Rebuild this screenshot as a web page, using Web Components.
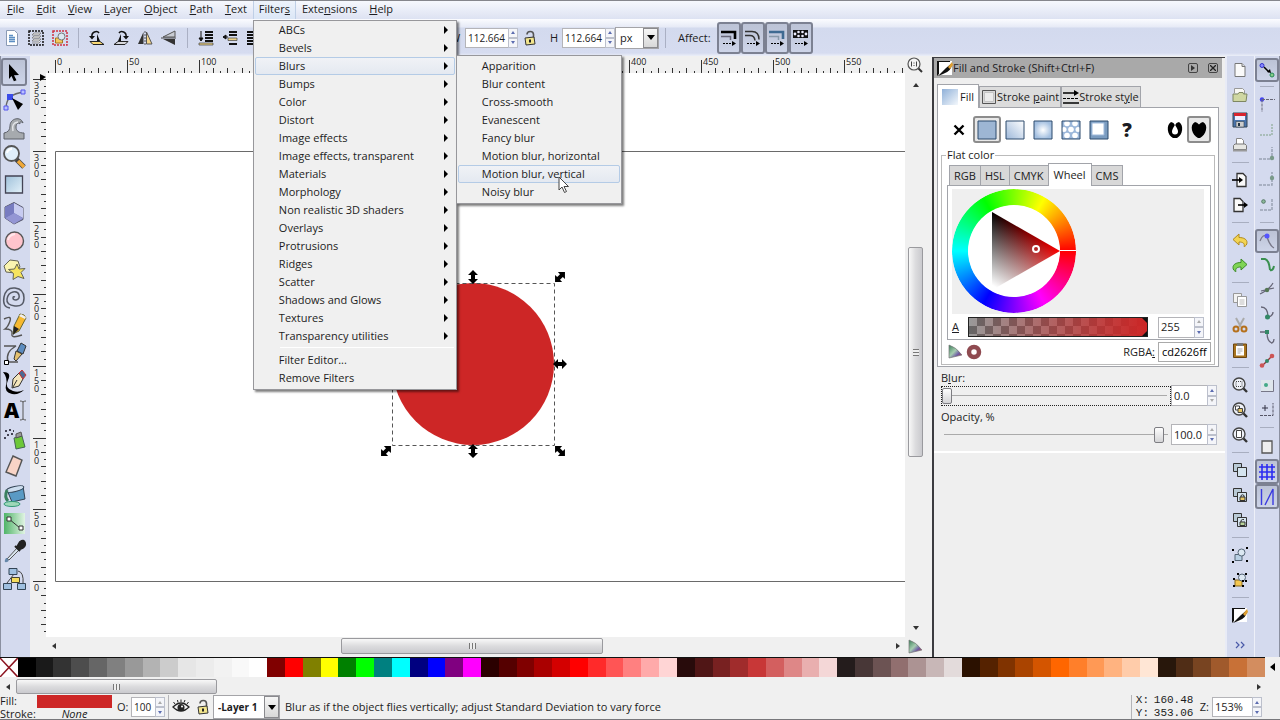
<!DOCTYPE html>
<html lang="en">
<head>
<meta charset="utf-8">
<title>Vector editor</title>
<style>
  html, body { margin: 0; height: 100%; }
  body {
    font: 11px/14px "Open Sans", "Noto Sans", sans-serif;
    color: #1c1c22;
    background: #f0f0f0;
    --chrome: #d4daee;
    --line: #a2a4aa;
  }
</style>
</head>
<body>
<app-window></app-window>
<script>
/* ---------- icon drawings: [size, markup] ---------- */
const page = '<path d="M3 1.5h7l3 3v10H3z" fill="#fafafa" stroke="#777"/><path d="M10 1.5v3h3" fill="#ddd" stroke="#777"/>';
const lens = '<circle cx="7" cy="7" r="6" fill="#eef1f8" stroke="#444" stroke-width="1.4"/><path d="M11.500 11.500L15 15" stroke="#333" stroke-width="2.400"/>';
const stack = '<path d="M1.500 1.500h8v8h-8z" fill="#b9cad6" stroke="#333"/><path d="M5.500 5.500h9v9h-9z" fill="#d5e4ef" stroke="#333"/>';
const ICONS = {
  /* toolbar */
  selall: [16, '<path d="M2.500.5h8l3 3v12h-11z" fill="#fff" stroke="#8a9ab5"/><path d="M5 5.500h4M5 7.500h6M5 9.500h6M5 11.500h6" stroke="#5d8fc4" stroke-width="1.500"/>'],
  sellayers: [16, '<path d="M1 1h14v14H1z" fill="none" stroke="#111" stroke-width="1.500" stroke-dasharray="2 1"/><path d="M4 5l2-2h7l-2 2zM4 8l2-2h7l-2 2zM4 11l2-2h7l-2 2zM4 13h7l2-2" fill="#eee" stroke="#777" stroke-width=".8"/>'],
  desel: [16, '<path d="M1 1h14v14H1z" fill="none" stroke="#d03040" stroke-width="1.500" stroke-dasharray="2 1"/><path d="M3.500 8h7v5h-7z" fill="#f5c860" stroke="#a87820"/><circle cx="9.500" cy="6.500" r="3.500" fill="#dce8f2" stroke="#777"/>'],
  rotl: [16, '<path d="M3 7c-1-5 5-7 7-4" fill="none" stroke="#111" stroke-width="1.500"/><path d="M0 6h6L3 9.500zM8 4l3 7H8z" fill="#111"/><path d="M1 11.500h10l4 3H4z" fill="#f7d774" stroke="#222"/>'],
  rotr: [16, '<path d="M13 7c1-5-5-7-7-4" fill="none" stroke="#111" stroke-width="1.500"/><path d="M16 6h-6l3 3.500zM8 4l-3 7h3z" fill="#111"/><path d="M15 11.500H5l-4 3h11z" fill="#d8d8dc" stroke="#222"/>'],
  fliph: [16, '<path d="M6.500 2v12H1z" fill="#333"/><path d="M9.500 2v12H15z" fill="#f3d488" stroke="#555"/><path d="M8 1v14" stroke="#555" stroke-dasharray="2 1"/>'],
  flipv: [16, '<path d="M14 7V1L2 7z" fill="#c8ccd4" stroke="#555"/><path d="M14 9v6L2 9z" fill="#333"/><path d="M0 8h15" stroke="#444"/>'],
  tobottom: [16, '<path d="M7 2h8M7 5h8M7 8h8M7 11h8" stroke="#111" stroke-width="2"/><path d="M3 1v8M1 8h4l-2 3z" stroke="#111" fill="#111"/><path d="M1 13h14v2H1z" fill="#e8cf86" stroke="#444" stroke-width=".7"/>'],
  lower: [16, '<path d="M7 2h8M7 5h8M7 14h8" stroke="#111" stroke-width="2"/><path d="M1 7h5M4 5v4L1 7z" stroke="#111" fill="#111"/><path d="M6 8h9v2.500H6z" fill="#e8cf86" stroke="#444" stroke-width=".7"/>'],
  raise: [16, '<path d="M1 2h8M1 5h8M1 8h8M1 11h8M1 14h8" stroke="#111" stroke-width="2"/>'],
  lock: [16, '<path d="M5 4.500c0-4 6.500-4 6.500 0V8" fill="none" stroke="#555" stroke-width="1.600"/><path d="M3 8l9-1 1 7-9 1z" fill="#f2e58c" stroke="#333"/><path d="M8 9.500v3" stroke="#222" stroke-width="2"/>'],
  affstroke: [16, '<path d="M0 2h14v7" fill="none" stroke="#000" stroke-width="2.600"/><path d="M0 6.500h9.500V10" fill="none" stroke="#667" stroke-width="1.500"/><path d="M2 13.500h9" stroke="#000" stroke-dasharray="2 1"/><path d="M11 11l4 2.500-4 2.500z"/>'],
  affcorner: [16, '<path d="M0 1.500h7q7 0 7 8M0 5.500h5q4.500 0 5 5" fill="none" stroke="#333" stroke-width="1.500"/><path d="M2 13.500h9" stroke="#000" stroke-dasharray="2 1"/><path d="M11 11l4 2.500-4 2.500z"/>'],
  affgrad: [16, '<path d="M0 2h14v7" fill="none" stroke="#3f6a92" stroke-width="2.600"/><path d="M0 6.500h9.500V10" fill="none" stroke="#89a" stroke-width="1.500"/><path d="M2 13.500h9" stroke="#000" stroke-dasharray="2 1"/><path d="M11 11l4 2.500-4 2.500z"/>'],
  affpat: [16, '<path d="M0 0h15v8H0z" fill="#111"/><g fill="#eef"><circle cx="2" cy="4" r="1.400"/><circle cx="5.500" cy="2" r="1.300"/><circle cx="5.500" cy="6" r="1.300"/><circle cx="9.500" cy="2" r="1.300"/><circle cx="9.500" cy="6" r="1.300"/><circle cx="13" cy="4" r="1.400"/></g><path d="M2 13.500h9" stroke="#000" stroke-dasharray="2 1"/><path d="M11 11l4 2.500-4 2.500z"/>'],
  eye: [16, '<path d="M0 8q8-8 16 0q-8 8-16 0z" fill="#eee" stroke="#222" stroke-width="1.300"/><circle cx="8" cy="8.500" r="3.500" fill="#222"/><circle cx="9" cy="7.500" r="1" fill="#fff"/><path d="M2 5L.5 3M5 3.500L4.500 1M8 3V.5M11 3.500L12 1M14 5l1.500-2" stroke="#222"/>'],
  cms: [16, '<path d="M2 1v13L15 11Q9 3 2 1z" fill="url(#cmsg)" stroke="#777" stroke-width=".7"/><defs><linearGradient id="cmsg" x1="0" y1="0" x2="1" y2="1"><stop offset="0" stop-color="#3a7f5a"/><stop offset=".45" stop-color="#a6cdb0"/><stop offset=".7" stop-color="#6f5ba6"/><stop offset="1" stop-color="#d0362c"/></linearGradient></defs>'],
  ring: [16, '<circle cx="8" cy="8" r="5" fill="none" stroke="#8f4a50" stroke-width="4.500"/>'],
  one: [16, '<circle cx="7" cy="7" r="6" fill="#f4f4f4" stroke="#555" stroke-width="1.200"/><path d="M11.500 11.500L15 15" stroke="#333" stroke-width="2"/><path d="M4.500 4.500v5M9.500 4.500v5M7 5.500v1M7 8v1" stroke="#444"/>'],
  brush: [16, '<path d="M1 1h14v14H1z" fill="#fff"/><path d="M0 1h13v1H2v12l-2 2z" fill="#111"/><path d="M15 3q0 8-9 11l-5 2 8-8z" fill="#111"/><path d="M11 7l4-5 1 3-3 4z" fill="#e0a030"/>'],
  /* paint kinds */
  px: [16, '<path d="M3.500 3.500l9 9M12.500 3.500l-9 9" stroke="#000" stroke-width="2.400"/>'],
  pflat: [20, '<path d="M1 1h18v18H1z" fill="#9db6d4" stroke="#2c4a6c"/>'],
  plin: [20, '<defs><linearGradient id="gl" x1="0" y1="1" x2="1" y2="0"><stop offset="0" stop-color="#9db8da"/><stop offset="1" stop-color="#fff"/></linearGradient></defs><path d="M1 1h18v18H1z" fill="url(#gl)" stroke="#2c4a6c"/>'],
  prad: [20, '<defs><radialGradient id="gr"><stop offset="0" stop-color="#fff"/><stop offset="1" stop-color="#a3bfe0"/></radialGradient></defs><path d="M1 1h18v18H1z" fill="url(#gr)" stroke="#2c4a6c"/>'],
  ppat: [20, '<path d="M1 1h18v18H1z" fill="#9db8da"/><g fill="#fff"><circle cx="6" cy="3.500" r="2.800"/><circle cx="14" cy="3.500" r="2.800"/><circle cx="3" cy="9.500" r="2.500"/><circle cx="10" cy="9.500" r="2.800"/><circle cx="17" cy="9.500" r="2.500"/><circle cx="6" cy="15.500" r="2.800"/><circle cx="14" cy="15.500" r="2.800"/></g><path d="M1 1h18v18H1z" fill="none" stroke="#2c4a6c"/>'],
  pswatch: [20, '<path d="M1 1h18v18H1z" fill="#7b9cc0" stroke="#2c4a6c"/><path d="M3 3h12v12H3z" fill="#fff" stroke="#9db8da"/>'],
  heart0: [18, '<path fill-rule="evenodd" d="M5 1q2 0 4 2.500Q11 1 13 1c5 3 4 13-2 16H7C1 14 0 4 5 1zM9 4Q6 8 6 10.500q0 3 3 3t3-3Q12 8 9 4z"/><path d="M7.500 0h3L9 5z" fill="#fff"/>'],
  heart1: [18, '<path d="M5 1q2 0 4 2.500Q11 1 13 1c6 3 3 13-3 16H8C2 14-1 4 5 1z"/>'],
  tfill: [16, '<defs><linearGradient id="tf" x1="0" y1="0" x2="1" y2="1"><stop offset="0" stop-color="#8fb0d8"/><stop offset="1" stop-color="#f4f8fc"/></linearGradient></defs><path d="M0 0h16v16H0z" fill="url(#tf)"/>'],
  tpaint: [16, '<path d="M1.500 1.500h13v13h-13z" fill="#d8d8d8" stroke="#555"/><path d="M3.500 3.500h9v9h-9z" fill="#ececec" stroke="#c4c4c4"/>'],
  tstyle: [16, '<path d="M0 4h13" stroke="#000" stroke-width="1.500"/><path d="M11 1l5 3-5 3z"/><path d="M0 9.500h16" stroke="#000" stroke-dasharray="3 1"/><path d="M0 14h16" stroke="#000" stroke-width="1.500"/>'],
  /* commands */
  newdoc: [16, page],
  open: [16, '<path d="M2.500 6V1.500h8l2 2V9" fill="#f8f8f4" stroke="#999"/><path d="M1 14V7h5l1-1.500h4l.5 1.500H15l-1 7.500H1z" fill="#cfd7a2" stroke="#7e8762"/>'],
  save: [16, '<path d="M1 1h14v14H1z" fill="#4a74ad" stroke="#345"/><path d="M2 1h12v3H2z" fill="#d8232e"/><path d="M3 4h10v4H3z" fill="#eef"/><path d="M4 9.500h8V15H4z" fill="#ccc" stroke="#345" stroke-width=".6"/><path d="M6 11h2v3H6z" fill="#234"/>'],
  print: [16, '<path d="M4.500 8V1.500h5l2 2V8" fill="#fff" stroke="#888"/><path d="M1.500 8.500L3 7h10l1.500 1.500v4h-13z" fill="#e6e6e2" stroke="#777"/><path d="M1 12.500h14v2H1z" fill="#999"/>'],
  imp: [16, '<path d="M5 1.500h6l3 3v10H5z" fill="#fafafa" stroke="#333" stroke-width="1.300"/><path d="M0 8h8" stroke="#000" stroke-width="1.600"/><path d="M7 5l4 3-4 3z"/>'],
  exp: [16, '<path d="M2 1.500h6l3 3v10H2z" fill="#fafafa" stroke="#333" stroke-width="1.300"/><path d="M6 8h7" stroke="#000" stroke-width="1.600"/><path d="M12 5l4 3-4 3z"/>'],
  undo: [16, '<path d="M7 2v3.500c5 0 8 2 8 5 0 2-1 3.500-3 4 1-3-1-4.500-5-4.500v3L1 7.500z" fill="#f3d452" stroke="#b08a1e"/>'],
  redo: [16, '<path d="M9 2v3.500c-5 0-8 2-8 5 0 2 1 3.500 3 4-1-3 1-4.500 5-4.500v3l6-5.500z" fill="#7fd454" stroke="#3c8a28"/>'],
  copy: [16, '<path d="M1.500 1.500h8v9h-8z" fill="#f2f2f2" stroke="#999"/><path d="M5.500 4.500h9v10h-9z" fill="#fff" stroke="#999"/><path d="M7.500 8h5M7.500 10h5M7.500 12h5" stroke="#bbb"/>'],
  cut: [16, '<path d="M4 1l5 9M12 1L7 10" stroke="#aaa" stroke-width="2"/><circle cx="4" cy="12" r="2.500" fill="none" stroke="#b5701c" stroke-width="2"/><circle cx="12" cy="12" r="2.500" fill="none" stroke="#b5701c" stroke-width="2"/>'],
  paste: [16, '<path d="M1.500 2h13v13.500h-13z" fill="#a8741e" stroke="#6a4410"/><path d="M4 4h8v9.500H4z" fill="#fff"/><path d="M5 1h6v3H5z" fill="#777"/><path d="M5.500 7h5M5.500 9h5M5.500 11h3" stroke="#aaa"/>'],
  zsel: [16, lens + '<path d="M4 4.500h6v5H4z" fill="none" stroke="#444" stroke-dasharray="1 1"/>'],
  zdraw: [16, lens + '<path d="M3.500 4h4v4h-4z" fill="#fff" stroke="#444"/><path d="M6 6.500h4.500v4H6z" fill="#e8c765" stroke="#444"/>'],
  zpage: [16, lens + '<path d="M4.500 3.500h5v7h-5z" fill="#fff" stroke="#444"/>'],
  dup: [16, stack],
  clone: [16, stack + '<path d="M8 10h5v3.500H8z" fill="#e8c765" stroke="#333"/><path d="M9 10V8.500q1.500-1.500 3 0V10" fill="none" stroke="#333"/>'],
  unlink: [16, stack + '<path d="M8 10h5v3.500H8z" fill="#b9d49a" stroke="#333"/><path d="M9 10V8.500q1.500-1.500 3-1" fill="none" stroke="#333"/>'],
  group: [16, '<path d="M3 7.500h7v6H3z" fill="#b8d0e4" stroke="#567"/><circle cx="9.500" cy="5.500" r="3.500" fill="#dce8f2" stroke="#567"/><path d="M0 2h2v2H0zM14 0h2v2h-2zM0 14h2v2H0zM14 13h2v2h-2z"/>'],
  ungroup: [16, '<path d="M3 8h7v6H3z" fill="#f5c850" stroke="#8a6a20"/><circle cx="10" cy="5.500" r="3.500" fill="#dce8f2" stroke="#567"/><path d="M1 6h2v2H1zM10 8h2v2h-2zM1 13h2v2H1zM10 13h2v2h-2zM5 1h2v2H5zM13 1h2v2h-2zM13 8h2v2h-2z"/>'],
  more: [16, '<path d="M4 5l3 3-3 3M9 5l3 3-3 3" fill="none" stroke="#4a5aa8" stroke-width="1.200"/>'],
  /* snapping */
  snap: [16, '<circle cx="3" cy="3.500" r="2" fill="#88f" stroke="#33c"/><circle cx="13" cy="13" r="2" fill="#8c8" stroke="#285"/><path d="M5 5l5 5" stroke="#000" stroke-width="1.500"/><path d="M12 11l-4-1 3-3z"/>'],
  sbbox: [16, '<circle cx="3" cy="3.500" r="2.200" fill="#44e"/><path d="M3 3.500h13M3 3.500V16" stroke="#667" stroke-dasharray="3 1"/>'],
  sedge: [16, '<path d="M1 14h12V2" fill="none" stroke="#9ab4a8" stroke-width="1.500" stroke-dasharray="2 1"/>'],
  scorner: [16, '<path d="M0 13h13V1" fill="none" stroke="#99a2b4" stroke-width="1.500" stroke-dasharray="3 1"/><circle cx="13" cy="12" r="2.200" fill="#7a9a8a"/>'],
  smid: [16, '<path d="M0 14h13V1" fill="none" stroke="#99a2b4" stroke-width="1.500" stroke-dasharray="3 1"/><circle cx="13" cy="7" r="2.200" fill="#7a9a8a"/>'],
  scenter: [16, '<path d="M1 14h12V2" fill="none" stroke="#99a2b4" stroke-width="1.500" stroke-dasharray="3 1"/><circle cx="4.500" cy="5.500" r="1.800" fill="#8cba9a" stroke="#576"/>'],
  snode: [16, '<path d="M1 8Q4 0 8 4q3 9 7 11" fill="none" stroke="#778" stroke-width="1.300"/><circle cx="8" cy="3" r="2.500" fill="#55f"/>'],
  spath: [16, '<path d="M2 2h4q4 1 5 11M15 9q-1 5-4 4" fill="none" stroke="#3a9050" stroke-width="2"/>'],
  sinter: [16, '<path d="M1 13Q10 9 14 2M2 10l13-3" fill="none" stroke="#667" stroke-width="1.200"/><circle cx="8" cy="9" r="2.200" fill="#575"/>'],
  scusp: [16, '<path d="M2 2q7 0 7 10M9 12q5-1 5-5" fill="none" stroke="#667" stroke-width="1.300"/><circle cx="8.500" cy="12" r="2.500" fill="#386"/>'],
  ssmooth: [16, '<path d="M1 3h7q0 10 5 11 2-1 2-4" fill="none" stroke="#667" stroke-width="1.300"/><path d="M6 1h4v4H6z" fill="#386"/>'],
  slinemid: [16, '<path d="M3 13L13 3" stroke="#933" stroke-width="1.300"/><circle cx="3" cy="12.500" r="2.300" fill="#c55"/><circle cx="13" cy="3" r="2.300" fill="#c55"/><circle cx="8" cy="8" r="2" fill="#386"/>'],
  sobj: [16, '<path d="M2 3h12v11H2z" fill="#dfe6ec"/><circle cx="7" cy="8" r="2" fill="#4a8"/><path d="M2 14.500h12.500V3" fill="none" stroke="#778"/>'],
  srot: [16, '<path d="M1 14.500h13V2" fill="none" stroke="#556" stroke-dasharray="3 1"/><path d="M6 4v6M3 7h6" stroke="#334"/>'],
  spage: [16, '<path d="M3 2h10v12H3z" fill="#eee" stroke="#555" stroke-width="1.300"/>'],
  sgrid: [16, '<path d="M3 0v16M8 0v16M13 0v16M0 3h16M0 8h16M0 13h16" stroke="#2c2cf0" stroke-width="1.600"/>'],
  sguide: [16, '<path d="M2.500 0v16M6 16L14 0v16" fill="none" stroke="#3a3ae0" stroke-width="1.400"/>'],
  /* toolbox */
  arrow: [24, '<path d="M7 4l10 11-5 .3 2.500 5-2.600 1L9.500 16 7 19z"/>'],
  node: [24, '<path d="M4 20Q4 6 22 4" fill="none" stroke="#666" stroke-width="1.300"/><path d="M5 6h6v6H5z" fill="#3a4be8"/><path d="M19 2h4v4h-4zM2 18h4v4H2z" fill="#b8c0ff" stroke="#55e"/><path d="M10 10l11 6-5 6z"/>'],
  tweak: [24, '<path d="M2 23v-6q6-1 6-7c0-8 11-10 13-3-2-2-4-1-3 1-2-2-4 0-4 3 0 4 3 6 8 6v6z" fill="#a6aaae" stroke="#5c6068"/><path d="M11 15q-2-8 5-9" fill="none" stroke="#e4e6ea" stroke-width="1.500"/>'],
  zoom: [24, '<path d="M14 15l8 8" stroke="#444" stroke-width="5"/><path d="M16 17l6 6" stroke="#f0a838" stroke-width="3.500"/><circle cx="9.500" cy="9.500" r="7.500" fill="#dfeefa" stroke="#555" stroke-width="1.800"/><path d="M5 9q1-4 5-4" fill="none" stroke="#fff" stroke-width="2"/>'],
  rect: [24, '<defs><linearGradient id="rg" x1="0" y1="0" x2="1" y2="1"><stop offset="0" stop-color="#9fc0da"/><stop offset="1" stop-color="#e4f2fa"/></linearGradient></defs><path d="M3.500 4h17v17h-17z" fill="url(#rg)" stroke="#445" stroke-width="1.300"/>'],
  box3d: [24, '<path d="M12 1.500l9 5v12L12 23l-9-6V6z" fill="#7078b8" stroke="#556"/><path d="M12 2l9 5v10l-9-5z" fill="#c8ccf0"/><path d="M12 12l9 5.500L12 23l-9-6z" fill="#9496d4"/><path d="M3 6l9-4v10l-9 5z" fill="#787cc0"/>'],
  ellipse: [24, '<circle cx="12.500" cy="12" r="9" fill="#ffc4cc" stroke="#555" stroke-width="1.400"/><path d="M6 11q1-5 7-6" fill="none" stroke="#fff" stroke-width="2" opacity=".6"/>'],
  star: [24, '<path d="M8 3l8 1 2 6-5 6-9-1-2-6z" fill="#faf4b0" stroke="#665"/><path d="M15 7l2 5 6-.5-4 4 3 6-6-2-5 3 .5-6-5-4 6-.5z" fill="#f6e45e" stroke="#665"/>'],
  spiral: [24, '<path d="M13 12q-2-1-2 1t3 2q4-1 3-5t-6-3-6 7 8 7 9-8-9-10T2 12t6 11" fill="none" stroke="#555a66" stroke-width="1.500"/>'],
  pencil: [24, '<path d="M2 6q8-4 6 2t-5 8q8 0 7 5t10 1" fill="none" stroke="#555" stroke-width="1.400"/><path d="M11 21l1-8 6-12q5 0 6 4l-7 13z" fill="#f6b830" stroke="#663"/><path d="M17 3l6 3 1-2-5-3z" fill="#eee"/><path d="M12 13l5 3-6 6z" fill="#222"/>'],
  pen: [24, '<path d="M2 4h12Q3 10 6 20h10" fill="none" stroke="#555" stroke-width="1.400"/><path d="M15 9l4-8 5 3-3 8z" fill="#5c8cc0" stroke="#333"/><path d="M12 17l2-8 6 3-6 7z" fill="#e4c070" stroke="#333"/><path d="M2.500 18.500h4v4h-4z" fill="#fff" stroke="#000"/>'],
  calli: [24, '<path d="M1 2q9 0 5 8t5 11q5 2 11-1-5 5-12 4-8-2-6-9t-3-13z"/><path d="M10 18l1-9 6-6 4 6-4 7z" fill="#f4e6bc" stroke="#333"/><path d="M17 3l3-3 4 5-3 4z" fill="#4a6a94" stroke="#c33"/><path d="M11 17l4-7" stroke="#333"/>'],
  text: [24, '<text x="2" y="20" font-family="Open Sans, sans-serif" font-weight="800" font-size="21">A</text><path d="M18 3q2 0 3 1 1-1 3-1M21 4v17M18 22q2 0 3-1 1 1 3 1" fill="none" stroke="#555"/>'],
  spray: [24, '<path d="M12 12l8-2 3 11-9 2z" fill="#6cc838" stroke="#465"/><path d="M14 8l5-2 1 4-6 2z" fill="#999" stroke="#555"/><path d="M3 4h2v2H3zM7 3h2v2H7zM5 8h2v2H5zM9 7h2v2H9zM2 11h2v2H2zM11 4h1v2h-1z" fill="#445"/>'],
  eraser: [24, '<path d="M11 2l9 4-6 16-10-4z" fill="#f8d4c6" stroke="#555" stroke-width="1.400"/>'],
  bucket: [24, '<path d="M5 7l16-4 2 13-13 3z" fill="#5a9ac4" stroke="#345"/><ellipse cx="13" cy="6" rx="9" ry="2.500" fill="#cde" stroke="#345" transform="rotate(-13 13 6)"/><path d="M5 7Q2 14 6 18" stroke="#3a8060" stroke-width="3" fill="none"/><ellipse cx="10" cy="21" rx="8" ry="2.500" fill="#9ed8b8" stroke="#397"/>'],
  gradient: [24, '<defs><linearGradient id="gg"><stop offset="0" stop-color="#4fb468"/><stop offset="1" stop-color="#e2f4e4"/></linearGradient></defs><path d="M2 2h21v21H2z" fill="url(#gg)"/><path d="M7 8l11 9" stroke="#333"/><path d="M5 6h4v4H5zM17 15h4v4h-4z" fill="#fff" stroke="#333"/>'],
  dropper: [24, '<path d="M5 20l10-11 2 2L7 21z" fill="#d8e4ee" stroke="#555"/><path d="M13 7l5 5M15 8l3-5q4-3 5 1t-5 6z" stroke="#222" stroke-width="2" fill="#222"/><path d="M4 19q-3 5 1 4 3-1 0-4z" fill="#68a"/>'],
  connector: [24, '<path d="M12 7L5 16" stroke="#444"/><path d="M16 4q6 1 5 13" fill="none" stroke="#444"/><path d="M7 1.500h8v6H7zM1.500 16.500h8v6h-8zM15.500 16.500h8v6h-8z" fill="#9fc0e0" stroke="#345"/><path d="M9.500 10.500h8v5h-8z" fill="#f4dc5c" stroke="#443"/>']
};

const $el = (name, css, html, after) => customElements.define(name, class extends HTMLElement {
  connectedCallback() {
    if (this.shadowRoot) return;
    const root = this.attachShadow({ mode: 'open' });
    root.innerHTML = `<style>*{box-sizing:border-box}button{font:inherit;color:inherit;padding:0;border:0;background:none}${css}</style>`
      + (typeof html === 'function' ? html(this) : html);
    if (after) after(this, root);
  }
});
const btns = (names, on = []) => names.split(' ').map(n =>
  n === '|' ? '<hr>' : `<icon-button icon="${n}"${on.includes(n) ? ' on' : ''}></icon-button>`).join('');

$el('ui-icon', ':host{display:block;flex:none}svg{display:block;overflow:visible}', h => {
  const [s, m] = ICONS[h.getAttribute('name')];
  return `<svg width="${s}" height="${s}" viewBox="0 0 ${s} ${s}" aria-hidden="true">${m}</svg>`;
});

$el('icon-button', `:host{display:block;width:var(--bw,24px);height:var(--bh,24px)}
  button{width:100%;height:100%;display:grid;place-content:center;border-radius:3px}
  :host([on]) button{border:var(--onb,2px solid #7c8192);background:var(--onbg,linear-gradient(#bcc3d6,#cdd4e8))}`,
  h => `<button type="button" aria-label="${h.getAttribute('icon')}"><ui-icon name="${h.getAttribute('icon')}"></ui-icon></button>`);

$el('spin-box', `:host{display:flex;height:20px}
  input{flex:1;min-width:0;width:0;font:inherit;color:inherit;border:1px solid #b4b4b8;border-right:0;background:#fff;padding:0 0 0 2px;margin:0;outline:0}
  .s{display:flex;flex-direction:column;width:10px;flex:none}
  button{flex:1;border:1px solid #bcc0cc;background:#f4f5f9;display:grid;place-content:center}
  i{border:2px solid transparent;border-bottom:3px solid #5c6cb0;border-top:0;width:0;height:0}
  button+button i{border-bottom:0;border-top:3px solid #5c6cb0}
  :host([max]) button:first-child i{border-bottom-color:#aaa}
  :host([min]) button:last-child i{border-top-color:#aaa}`,
  h => `<input value="${h.getAttribute('value')}" aria-label="${h.getAttribute('label')}"><span class="s"><button type="button" aria-label="Increase"><i></i></button><button type="button" aria-label="Decrease"><i></i></button></span>`);

$el('combo-box', `:host{display:flex;position:relative;background:#fff;border:1px solid #a4a4a8}
  select{appearance:none;border:0;background:none;font:inherit;color:inherit;width:100%;padding:0 0 0 4px;margin:0;outline:0}
  span{width:15px;flex:none;border:1px solid #8a8a8e;background:linear-gradient(#f6f6f6,#d8d8d8);display:grid;place-content:center}
  i{border:4px solid transparent;border-top:5px solid #000;border-bottom:0}`,
  h => `<select aria-label="${h.getAttribute('label')}"><option>${h.getAttribute('value')}</option></select><span><i></i></span>`);

/* ---------- menus ---------- */
$el('menu-item', `:host{display:block;position:relative;height:18px;margin:0 1px;border:1px solid transparent;border-radius:2px}
  :host([hot]){border-color:#b4cbe6;background:linear-gradient(#f0f2f6,#e4e9f1);z-index:1}
  button{display:flex;width:100%;height:16px;align-items:center;padding-left:23px;white-space:nowrap}
  i{margin-left:auto;margin-right:6px;border:4px solid transparent;border-left:4px solid #000;border-right:0}`,
  h => `<button type="button" role="menuitem"><slot></slot>${h.hasAttribute('sub') ? '<i></i>' : ''}</button><slot name="over"></slot>`);

$el('pop-menu', `:host{display:block;background:#f0f0f0;border:1px solid #97979b;box-shadow:2px 2px 2px #00000080;padding-bottom:2px;font-size:11px}
  ::slotted(hr){margin:2px 2px 3px 26px;border:0;border-top:1px solid #fff}`, '<slot></slot>');

$el('menu-bar', `:host{display:flex;height:18px;background:linear-gradient(#f6f8fd,#dde2f2);position:relative;z-index:5}
  nav{display:flex;padding-left:1px}
  .m{position:relative;border:1px solid transparent;border-width:0 1px;display:flex}
  .m.open{background:linear-gradient(#eef3fb,#dbe6f6);border-color:#bfcfe6}
  .m>button{padding:0 5px;height:16px;white-space:nowrap}
  .top{position:absolute;top:19px;left:-1px;width:204px;z-index:2}
  .sub{position:absolute;left:200px;top:-3px;width:166px;padding-top:1px;z-index:3}
  svg{position:absolute;left:99px;top:10px;z-index:4}`,
  () => {
    const names = ['<u>F</u>ile', '<u>E</u>dit', '<u>V</u>iew', '<u>L</u>ayer', '<u>O</u>bject', '<u>P</u>ath', '<u>T</u>ext', 'Filter<u>s</u>', 'Exte<u>n</u>sions', '<u>H</u>elp'];
    const groups = ['ABCs', 'Bevels', 'Blurs', 'Bumps', 'Color', 'Distort', 'Image effects', 'Image effects, transparent', 'Materials', 'Morphology', 'Non realistic 3D shaders', 'Overlays', 'Protrusions', 'Ridges', 'Scatter', 'Shadows and Glows', 'Textures', 'Transparency utilities'];
    const blurs = ['Apparition', 'Blur content', 'Cross-smooth', 'Evanescent', 'Fancy blur', 'Motion blur, horizontal', 'Motion blur, vertical', 'Noisy blur'];
    const cursor = '<svg slot="over" width="12" height="18" viewBox="0 0 12 18"><path d="M1 1v13l3-3 2.500 5.500 2-1L6 10.500h4.500z" fill="#fff" stroke="#444"/></svg>';
    const sub = `<pop-menu class="sub" slot="over">${blurs.map((b, i) => `<menu-item${i === 6 ? ' hot' : ''}>${b}${i === 6 ? cursor : ''}</menu-item>`).join('')}</pop-menu>`;
    const menu = `<pop-menu class="top">${groups.map(g => `<menu-item sub${g === 'Blurs' ? ' hot' : ''}>${g}${g === 'Blurs' ? sub : ''}</menu-item>`).join('')}<hr><menu-item>Filter Editor...</menu-item><menu-item>Remove Filters</menu-item></pop-menu>`;
    return `<nav>${names.map((n, i) => `<div class="m${i === 7 ? ' open' : ''}"><button type="button">${n}</button>${i === 7 ? menu : ''}</div>`).join('')}</nav>`;
  });

/* ---------- control bar ---------- */
$el('control-bar', `:host{display:flex;align-items:center;height:37px;background:linear-gradient(#fbfcff,#e6eaf6 8px,#d3daee 9px,#d6dcf0 34px,#eceff8)}
  hr{width:1px;height:20px;border:0;margin:0 6px;background:#aab0c4}
  .group{display:flex;align-items:center}
  .size{margin-left:184px}
  .size label{width:15px}
  .size .h{margin-left:8px;width:12px}
  spin-box{width:53px;font-size:10px}
  combo-box{width:44px;height:22px}
  .aff{margin:0 3px 0 6px;width:36px}
  .toggles{display:flex;--bh:32px}`,
  `<div class="group">${btns('selall sellayers desel | rotl rotr fliph flipv | tobottom lower raise')}</div>
   <div class="group size"><label>W</label><spin-box value="112.664" label="Width"></spin-box><icon-button icon="lock"></icon-button><label class="h">H</label><spin-box value="112.664" label="Height"></spin-box><combo-box value="px" label="Unit"></combo-box></div>
   <div class="group"><hr><span class="aff">Affect:</span><div class="toggles">${btns('affstroke affcorner affgrad affpat', ['affstroke', 'affcorner', 'affgrad', 'affpat'])}</div></div>`);

/* ---------- left toolbox ---------- */
$el('tool-box', `:host{display:flex;flex-direction:column;gap:1px;width:30px;flex:none;background:var(--chrome);border-left:1px solid #8b90a0;padding-top:2px;--bw:26px;--bh:28px}`,
  ['arrow node tweak zoom rect', 'box3d ellipse star spiral pencil', 'pen calli text spray eraser', 'bucket gradient dropper connector']
    .map(g => `<div>${btns(g, ['arrow'])}</div>`).join(''));

/* ---------- rulers and canvas ---------- */
const drawRuler = (v, size) => {
  const zero = v ? 508 : 9, unit = 71.75;
  let s = '';
  for (let k = -10; k <= 400; k++) {
    const p = Math.round(v ? zero - k * unit / 10 : zero + k * unit / 10);
    if (p < 0 || p > size) continue;
    const len = k % 10 === 0 ? 13 : k % 2 === 0 ? 5 : 2;
    s += v ? `<path d="M${16 - len} ${p}.5h${len}" stroke="#333"/>` : `<path d="M${p}.5 ${17 - len}v${len}" stroke="#333"/>`;
    if (k % 10 === 0 && k >= 0 && p + 20 < size) {
      const t = String(k * 5), ys = [...t].map((c, i) => p + 10 + i * 8);
      s += v ? `<text x="${[...t].map(() => 4).join(' ')}" y="${ys.join(' ')}">${t}</text>` : `<text x="${p + 2}" y="9">${t}</text>`;
    }
  }
  return v ? s + '<path d="M10 1l6 3-6 4z" fill="#000"/>' : s;
};
$el('ruler-bar', ':host{display:block;overflow:hidden;background:#f0f0f0;min-width:0;min-height:0}svg{display:block;width:100%;height:100%}text{font:9px "Open Sans",sans-serif;fill:#222}', '<svg></svg>', (h, root) => {
  const svg = root.querySelector('svg'), v = h.hasAttribute('vertical');
  new ResizeObserver(() => {
    const r = svg.getBoundingClientRect();
    svg.innerHTML = drawRuler(v, v ? r.height : r.width);
  }).observe(h);
});

$el('drawing-canvas', ':host{display:block;background:#fff;overflow:hidden}svg{display:block;width:100%;height:100%}', () => {
  const arrow = (x, y, r) => `<path transform="translate(${x} ${y}) rotate(${r})" d="M-7 0l5-5v3h4v-3l5 5-5 5v-3h-4v3z"/>`;
  return `<svg><path d="M2000 78.500H9.500v430H2000" fill="none" stroke="#6a6a6a"/>
    <circle cx="427" cy="291" r="81" fill="#cd2626"/>
    <path d="M346.500 210.500h162v162h-162z" fill="none" stroke="#555" stroke-dasharray="4 3"/>
    ${arrow(427, 204, 90)}${arrow(427, 378, 90)}${arrow(514, 291, 0)}${arrow(340, 291, 0)}${arrow(514, 204, -45)}${arrow(514, 378, 45)}${arrow(340, 378, -45)}</svg>`;
});

$el('scroll-bar', `:host{display:flex;align-items:center;background:#f0f0f0}
  :host([vertical]){flex-direction:column}
  .track{flex:1;align-self:stretch;display:flex}
  :host([vertical]) .track{flex-direction:column}
  .t{border:1px solid #9a9a9e;border-radius:2px;background:linear-gradient(#f8f8f8,#dcdcde 50%,#cacace);display:grid;place-content:center}
  :host([vertical]) .t{background:linear-gradient(90deg,#f8f8f8,#dcdcde 50%,#cacace)}
  .g{width:7px;height:6px;background:repeating-linear-gradient(90deg,#777 0 1px,#eee 1px 3px)}
  :host([vertical]) .g{background:repeating-linear-gradient(#777 0 1px,#eee 1px 3px);width:6px;height:7px}
  button{width:15px;height:13px;display:grid;place-content:center;flex:none}
  i{border:3px solid transparent;border-right:4px solid #333;border-left:0}
  button:last-child i{border-right:0;border-left:4px solid #333}
  :host([vertical]) i{border:3px solid transparent;border-bottom:4px solid #333;border-top:0}
  :host([vertical]) button:last-child i{border:3px solid transparent;border-top:4px solid #333;border-bottom:0}`,
  h => {
    const [a, b, c] = h.getAttribute('split').split(' ');
    return `<button type="button" aria-label="Back"><i></i></button><div class="track"><span style="flex:${a}"></span><span class="t" style="flex:${b}"><span class="g"></span></span><span style="flex:${c}"></span></div><button type="button" aria-label="Forward"><i></i></button>`;
  });

$el('canvas-area', `:host{flex:1;min-width:0;display:grid;grid-template:17px 1fr 20px / 16px 1fr 19px;padding-right:8px;background:#f0f0f0}
  .top{grid-column:1/3;padding-left:16px}
  .v{margin:5px 1px 3px 3px}
  .h{grid-column:1/3;margin:1px 0 3px 16px}
  .c{align-self:center;justify-self:center}`,
  `<ruler-bar class="top"></ruler-bar><ui-icon class="c" name="one"></ui-icon>
   <ruler-bar vertical></ruler-bar><drawing-canvas></drawing-canvas><scroll-bar class="v" vertical split="157 208 165"></scroll-bar>
   <scroll-bar class="h" split="281 260 288"></scroll-bar><ui-icon class="c" name="cms"></ui-icon>`);

/* ---------- colour wheel ---------- */
$el('color-wheel', `:host{display:block;background:#efefef;height:125px}
  .w{position:relative;width:124px;height:124px}
  .ring{width:124px;height:124px;border-radius:50%;background:conic-gradient(from 90deg,red,#f0f,#00f,#0ff,#0f0,#ff0,red);
    -webkit-mask:radial-gradient(circle,transparent 45px,#000 46px)}
  .disc{position:absolute;inset:16px;border-radius:50%;background:#fff}
  .tri{position:absolute;left:40px;top:23px;width:68px;height:78px;clip-path:polygon(0 0,100% 50%,0 100%);
    background:linear-gradient(210deg,#000 34%,#fff 96%),linear-gradient(90deg,#000,red);background-blend-mode:screen}
  .line{position:absolute;left:108px;top:61px;width:16px;height:1px;background:#fff}
  .dot{position:absolute;left:80px;top:56px;width:8px;height:8px;border:2px solid #fff;border-radius:50%}`,
  '<div class="w"><div class="ring"></div><div class="disc"></div><div class="tri"></div><div class="line"></div><div class="dot"></div></div>');

$el('value-slider', `:host{display:block;height:20px}
  input{appearance:none;width:100%;height:100%;margin:0;background:linear-gradient(#aaa,#aaa) center/calc(100% - 6px) 1px no-repeat;outline:0;display:block}
  :host([focused]) input{border:1px dotted #222}
  input::-webkit-slider-thumb{appearance:none;width:10px;height:16px;border:1px solid #7d7d82;border-radius:2px;background:linear-gradient(#fdfdfd,#d4d4d6)}
  :host([alpha]) input{border:1px solid #222;background:linear-gradient(90deg,#cd262600,#cd2626),repeating-conic-gradient(#666 0 25%,#999 0 50%) 0 0/16px 16px}
  :host([alpha]) input::-webkit-slider-thumb{width:5px;height:18px;border:0;border-radius:0;background:linear-gradient(225deg,#111 3px,transparent 4px),linear-gradient(315deg,#111 3px,transparent 4px)}`,
  h => `<input type="range" aria-label="${h.getAttribute('label')}" value="${h.getAttribute('value')}">`);

/* ---------- fill and stroke dock ---------- */
$el('fill-stroke-dock', `:host{display:block;width:293px;flex:none;background:#efefef;padding-top:1px}
  .frame{border:solid #3c3c40;border-width:1px 0 0 2px;height:100%}
  header{display:flex;align-items:center;height:20px;background:#a9a9a9;margin-right:3px;padding:0 4px 0 3px}
  header span{flex:1;white-space:nowrap}
  header button{width:10px;height:10px;border:1px solid #444;border-radius:2px;margin-left:10px;display:grid;place-content:center}
  svg{display:block}
  .upper{border-bottom:2px solid #fff;padding:6px 6px 6px 3px}
  .tabs{display:flex;align-items:flex-end;height:23px}
  .tabs button{display:flex;align-items:center;height:21px;border:1px solid var(--line);border-bottom:0;background:#dcdcdc;padding:0 1px;white-space:nowrap}
  .tabs button.on{height:24px;background:#fff;margin-bottom:-1px;position:relative;padding:0 4px;gap:2px}
  .panel{background:#fff;border:1px solid var(--line);padding:8px 3px 1px}
  .paint{display:flex;height:27px;align-items:center;--bw:28px;--bh:27px;--onb:2px solid #8c8c8c;--onbg:#e8e8e8;padding:0 4px 0 4px}
  .paint b{width:28px;text-align:center;font:900 19px/24px "Open Sans",sans-serif}
  .gap{flex:1}
  .paint .rule{--bw:24px}
  fieldset{margin:5px 0 0;padding:0 3px 1px 5px;border:1px solid #bbb;min-width:0}
  legend{padding:0 1px;margin-left:-1px}
  .kinds{height:22px;margin-left:2px;margin-top:1px}
  .kinds button{height:20px;padding:0 4px;background:#d8d8d8;margin-right:-1px}
  .kinds button.on{height:23px;padding:0 5px;z-index:1}
  .inner{border:1px solid var(--line);padding:3px 6px 1px 4px}
  .row{display:flex;align-items:center}
  .alpha{margin-top:2px;height:22px}
  .alpha value-slider{width:180px;margin-left:8px}
  .alpha label{width:8px}
  .alpha spin-box{width:46px;margin-left:auto;height:21px}
  .hex{height:23px;gap:3px}
  .hex input{width:53px;height:20px;font:inherit;border:1px solid #aaa;padding:0 0 0 3px;margin:0}
  .hex label{margin-left:auto}
  .cap{display:block;margin:4px 4px 0;height:14px}
  .val{margin:0 2px 0 4px;height:21px}
  .val value-slider{flex:1}
  .val spin-box{width:46px;height:21px}`,
  `<section class="frame"><header><ui-icon name="brush"></ui-icon><span>Fill and Stroke (Shift+Ctrl+F)</span>
    <button type="button" aria-label="Iconify"><svg width="6" height="6"><path d="M1 0l4 3-4 3z" fill="#333"/></svg></button>
    <button type="button" aria-label="Close"><svg width="6" height="6"><path d="M0 0l6 6M6 0L0 6" stroke="#222" stroke-width="1.300"/></svg></button></header>
   <div class="upper">
    <div class="tabs" role="tablist"><button type="button" class="on" role="tab"><ui-icon name="tfill"></ui-icon>Fill</button><button type="button" role="tab"><ui-icon name="tpaint"></ui-icon><span>Stroke <u>p</u>aint</span></button><button type="button" role="tab"><ui-icon name="tstyle"></ui-icon><span>Stroke st<u>y</u>le</span></button></div>
    <div class="panel">
     <div class="paint">${btns('px pflat plin prad ppat pswatch', ['pflat'])}<b>?</b><span class="gap"></span><icon-button class="rule" icon="heart0"></icon-button><icon-button class="rule" icon="heart1" on></icon-button></div>
     <fieldset><legend>Flat color</legend>
      <div class="tabs kinds" role="tablist"><button type="button" role="tab">RGB</button><button type="button" role="tab">HSL</button><button type="button" role="tab">CMYK</button><button type="button" role="tab" class="on">Wheel</button><button type="button" role="tab">CMS</button></div>
      <div class="inner"><color-wheel></color-wheel>
       <div class="row alpha"><label><u>A</u></label><value-slider alpha value="100" label="Alpha"></value-slider><spin-box max value="255" label="Alpha value"></spin-box></div></div>
      <div class="row hex"><ui-icon name="cms"></ui-icon><ui-icon name="ring"></ui-icon><label for="rgba">RGBA<u>:</u></label><input id="rgba" value="cd2626ff"></div>
     </fieldset>
    </div>
    <span class="cap">B<u>l</u>ur:</span>
    <div class="row val"><value-slider focused value="0" label="Blur"></value-slider><spin-box min value="0.0" label="Blur amount"></spin-box></div>
    <span class="cap">Opacity, %</span>
    <div class="row val"><value-slider value="97" label="Opacity"></value-slider><spin-box max value="100.0" label="Opacity amount"></spin-box></div>
   </div></section>`);

$el('command-bar', `:host{display:block;width:30px;flex:none;background:var(--chrome);border-left:2px solid #e8ebf6;border-right:1px solid #eef0f8;padding-top:1px;--bw:25px;--bh:25px}
  hr{border:0;height:1px;background:#a8aec0;margin:5px 5px 4px}
  icon-button:last-child{margin-top:5px}`,
  btns('newdoc open save print | imp exp | undo redo | copy cut paste | zsel zdraw zpage | dup clone unlink | group ungroup | brush more'));

$el('snap-bar', `:host{display:block;width:25px;flex:none;background:var(--chrome);border-right:1px solid #8b90a0;padding-top:2px;--bw:24px;--bh:24px}
  div{display:flow-root}
  hr{border:0;height:1px;background:#a8aec0;margin:6px 5px}
  .master hr{margin:4px 5px}`,
  `<div class="master">${btns('snap |', ['snap'])}</div><div style="--bh:25px">${btns('sbbox sedge scorner smid scenter |')}</div><div>${btns('snode spath sinter scusp ssmooth slinemid sobj srot |', ['snode'])}</div><div style="--bh:25px">${btns('spage sgrid sguide', ['sgrid', 'sguide'])}</div>`);

/* ---------- palette ---------- */
$el('color-palette', `:host{display:flex;height:20px;background:#f0f0f0}
  .s{flex:1;display:flex;border-top:1px solid #111}
  .s button{flex:1}
  .s button:first-child{background:#fff}
  .s svg{display:block;width:100%;height:100%}
  .m{width:15px;flex:none;display:grid;place-content:center}`, () => {
  const c = ('000000 1a1a1a 333333 4d4d4d 666666 808080 999999 b3b3b3 cccccc e6e6e6 ececec f2f2f2 f9f9f9 ffffff 800000 ff0000 808000 ffff00 008000 00ff00 008080 00ffff 000080 0000ff 800080 ff00ff '
    + '2b0000 550000 800000 aa0000 d40000 ff0000 ff2a2a ff5555 ff8080 ffaaaa ffd5d5 280b0b 501616 782121 a02c2c c83737 d35f5f de8787 e9afaf f4d7d7 241c1c 483737 6c5353 916f6f ac9393 c8b7b7 e3dbdb '
    + '2b1100 552200 803300 aa4400 d45500 ff6600 ff7f2a ff9955 ffb380 ffccaa ffe6d5 28170b 502d16 784421 a05a2c c87137 d38d5f').split(' ');
  return `<div class="s"><button type="button" aria-label="None"><svg viewBox="0 0 18 18" preserveAspectRatio="none"><path d="M0 0l18 18M18 0L0 18" stroke="#8c1420" stroke-width="1.500"/></svg></button>${c.map(x => `<button type="button" aria-label="#${x}" style="background:#${x}"></button>`).join('')}</div><button type="button" class="m" aria-label="Palette menu"><svg width="6" height="8"><path d="M5 0v8L0 4z"/></svg></button>`;
});

/* ---------- status bar ---------- */
$el('status-bar', `:host{display:flex;align-items:center;height:25px;background:#f0f0f0;border-bottom:1px solid #77777b}
  .style{display:grid;grid-template-columns:37px 75px;line-height:12px;height:24px}
  .style em{text-align:center}
  .style .sw{background:#cd2626;height:13px}
  .o{margin:0 2px 0 5px;width:12px}
  spin-box{width:34px;font-size:10px}
  hr{width:1px;height:24px;border:0;margin:0 0 0 3px;background:#b4b4b8}
  combo-box{width:67px;height:24px;font-weight:700;font-size:10px}
  .msg{margin-left:5px;flex:1;white-space:nowrap}
  .xy{font:11px/13px "Liberation Mono",monospace;display:grid;grid-template-columns:18px 46px;margin-left:4px}
  .z{width:50px;margin:0 18px 0 3px;font-size:11px}`,
  `<div class="style"><span>Fill:</span><span class="sw"></span><span>Stroke:</span><em>None</em></div>
   <span class="o">O:</span><spin-box max value="100" label="Opacity"></spin-box><hr>
   <icon-button icon="eye"></icon-button><icon-button icon="lock" style="--bw:20px"></icon-button>
   <combo-box value="-Layer 1" label="Layer"></combo-box>
   <span class="msg">Blur as if the object flies vertically; adjust Standard Deviation to vary force</span>
   <hr><div class="xy"><span>X:</span><span>160.48</span><span>Y:</span><span>353.06</span></div>
   <span>Z:</span><spin-box class="z" value="153%" label="Zoom"></spin-box>`);

$el('app-window', `:host{display:flex;flex-direction:column;min-height:100vh;border-top:1px solid #85868c;box-sizing:border-box}
  main{flex:1;display:flex}
  .ps{height:15px;margin:2px 14px 1px 0}`,
  `<menu-bar></menu-bar><control-bar></control-bar>
   <main><tool-box></tool-box><canvas-area></canvas-area><fill-stroke-dock></fill-stroke-dock><command-bar></command-bar><snap-bar></snap-bar></main>
   <color-palette></color-palette><scroll-bar class="ps" split="1 199 1036"></scroll-bar><status-bar></status-bar>`);
</script>
</body>
</html>
